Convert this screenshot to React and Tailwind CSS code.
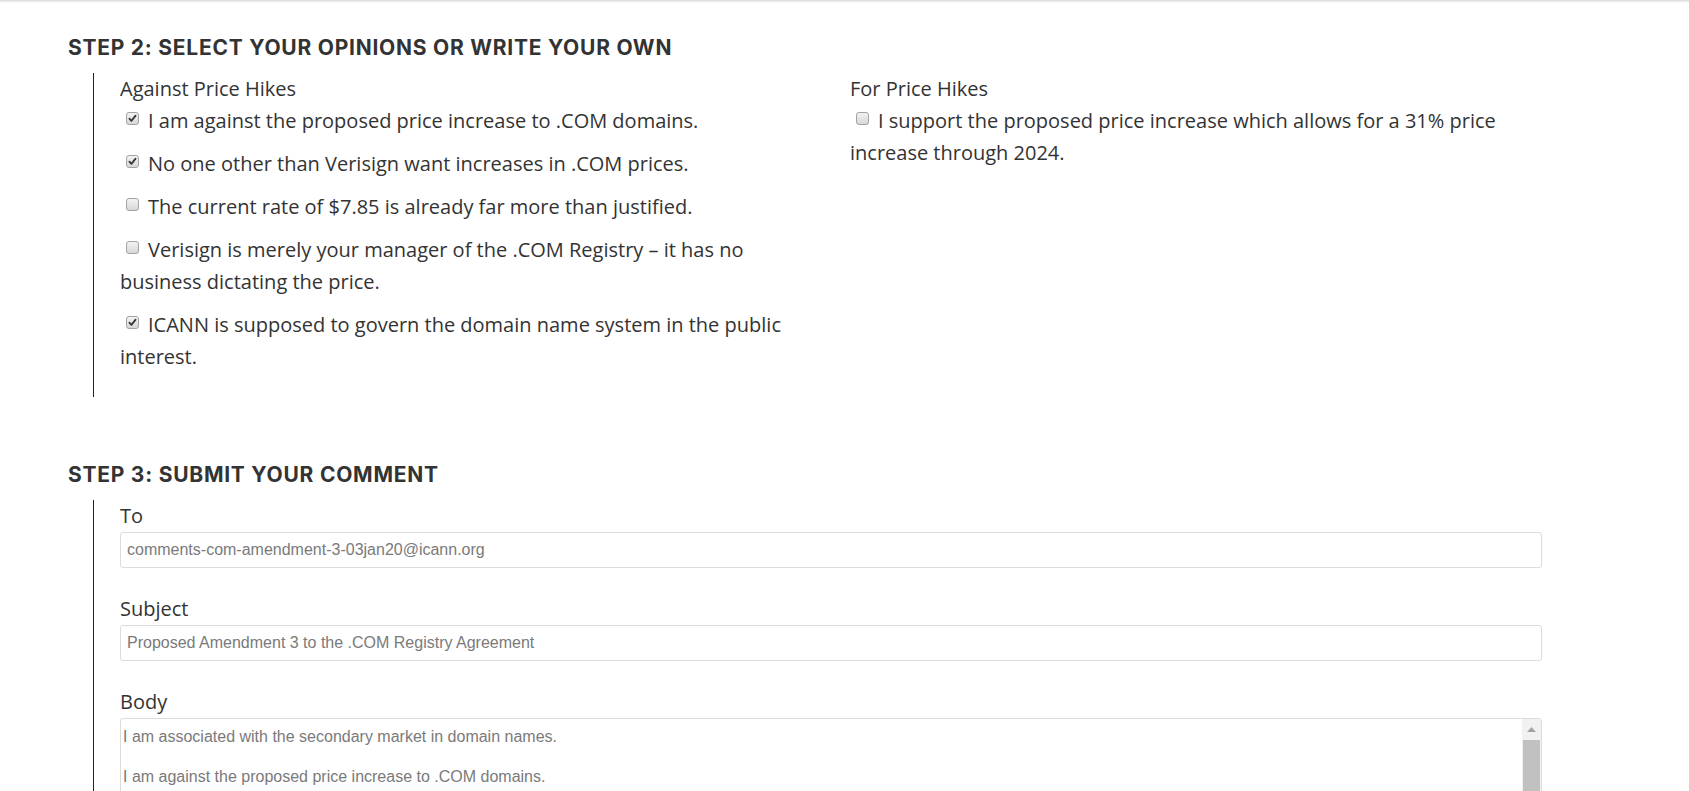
import React from 'react';

const body = "font-['Open_Sans',sans-serif]";

function Box({ checked }) {
  return (
    <svg width="13" height="13" viewBox="0 0 13 13" className="inline-block align-[3px] ml-[6px] mr-[9px]">
      <defs>
        <linearGradient id="cbg" x1="0" y1="0" x2="0" y2="1">
          <stop offset="0" stopColor="#f4f4f4" />
          <stop offset="1" stopColor="#d6d6d6" />
        </linearGradient>
      </defs>
      <rect x="0.5" y="0.5" width="12" height="12" rx="2.5" fill="url(#cbg)" stroke="#a3a3a3" />
      {checked && (
        <path d="M3.4 6.6 L5.4 8.9 L9.6 3.6" fill="none" stroke="#333" strokeWidth="1.7" strokeLinecap="round" strokeLinejoin="round" />
      )}
    </svg>
  );
}

function Option({ checked, children }) {
  return (
    <p className="leading-[32px] mb-[11px]">
      <Box checked={checked} />
      {children}
    </p>
  );
}

function Heading({ children }) {
  return (
    <h2 className="font-['Inter',sans-serif] font-bold text-[21px] leading-[24px] tracking-[0.75px] text-[#333]">
      {children}
    </h2>
  );
}

function Field({ label, value }) {
  return (
    <div className="mb-[25px]">
      <p className="leading-[32px]">{label}</p>
      <div className="h-[36px] flex items-center px-[6px] border border-[#dcdcdc] rounded-[3px] font-['Liberation_Sans',Arial,sans-serif] text-[16px] text-[#7a7a7a]">
        {value}
      </div>
    </div>
  );
}

export default function App() {
  return (
    <div className={`h-[791px] overflow-hidden bg-white text-[20px] text-[#333] ${body}`}>
      <div className="h-[3px] bg-linear-to-b from-[#d9d9d9] to-white" />

      {/* step 2 */}
      <section className="pl-[68px] pt-[33px]">
        <Heading>STEP 2: SELECT YOUR OPINIONS OR WRITE YOUR OWN</Heading>
        <div className="ml-[25px] mt-[13px] w-[1449px] border-l border-[#222] pl-[26px] pb-[13px]">
          <div className="grid grid-cols-2 gap-x-[38px]">
            <div>
              <p className="leading-[32px]">Against Price Hikes</p>
              <Option checked>I am against the proposed price increase to .COM domains.</Option>
              <Option checked>No one other than Verisign want increases in .COM prices.</Option>
              <Option>The current rate of $7.85 is already far more than justified.</Option>
              <Option>Verisign is merely your manager of the .COM Registry – it has no business dictating the price.</Option>
              <Option checked>ICANN is supposed to govern the domain name system in the public interest.</Option>
            </div>
            <div>
              <p className="leading-[32px]">For Price Hikes</p>
              <Option>I support the proposed price increase which allows for a 31% price increase through 2024.</Option>
            </div>
          </div>
        </div>
      </section>

      {/* step 3 */}
      <section className="pl-[68px] mt-[66px]">
        <Heading>STEP 3: SUBMIT YOUR COMMENT</Heading>
        <div className="ml-[25px] mt-[13px] w-[1449px] border-l border-[#222] pl-[26px] pb-[40px]">
          <Field label="To" value="comments-com-amendment-3-03jan20@icann.org" />
          <Field label="Subject" value="Proposed Amendment 3 to the .COM Registry Agreement" />
          <p className="leading-[32px]">Body</p>
          <div className="h-[220px] flex border border-[#dcdcdc] rounded-[3px]">
            <div className="flex-1 pl-[2px] pt-[8px] font-['Liberation_Sans',Arial,sans-serif] text-[16px] leading-[20px] text-[#7a7a7a]">
              <p>I am associated with the secondary market in domain names.</p>
              <p>&nbsp;</p>
              <p>I am against the proposed price increase to .COM domains.</p>
            </div>
            <div className="w-[19px] bg-[#f1f1f1] flex flex-col items-center">
              <div className="h-[21px] flex items-center justify-center">
                <svg width="9" height="5" viewBox="0 0 9 5">
                  <path d="M0 5 L4.5 0 L9 5 Z" fill="#a3a3a3" />
                </svg>
              </div>
              <div className="w-[17px] flex-1 bg-[#c1c1c1]" />
            </div>
          </div>
        </div>
      </section>
    </div>
  );
}
